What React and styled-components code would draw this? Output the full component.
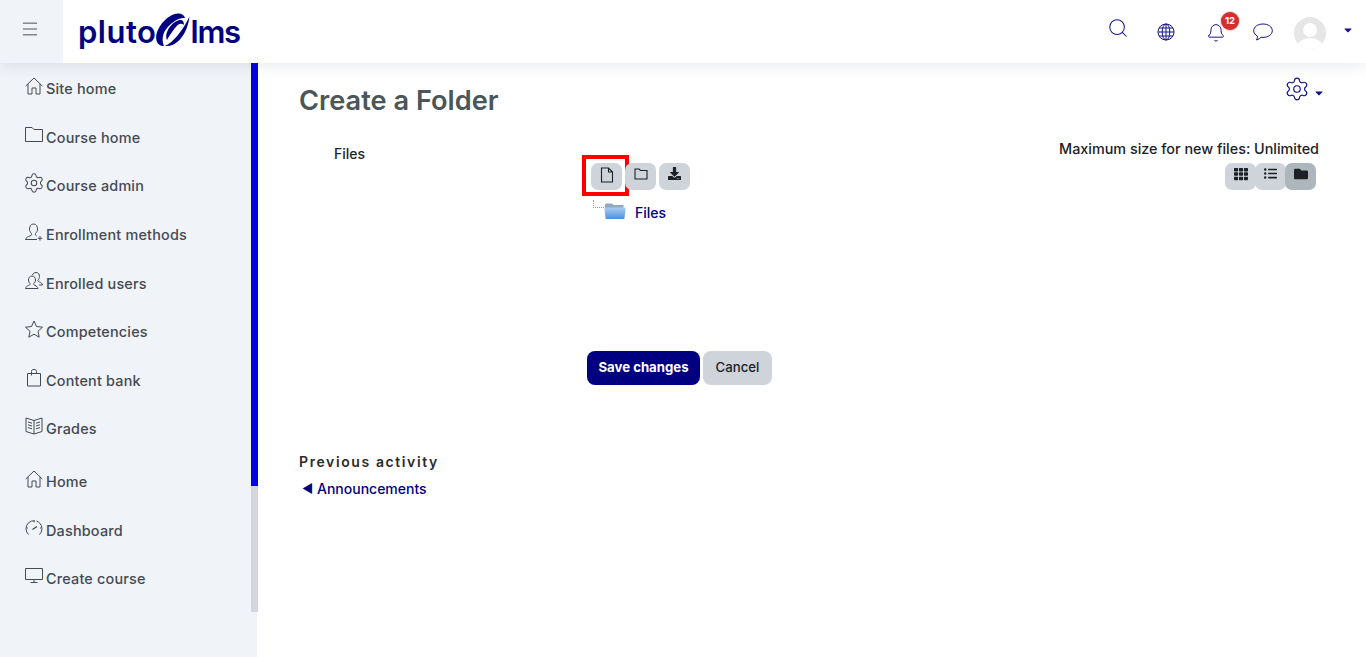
import React from "react"
import styled, { createGlobalStyle } from "styled-components"
import { Search, Bell, Settings, Menu } from "lucide-react"
import { FaFolder, FaTh, FaListUl, FaDownload, FaCaretDown } from "react-icons/fa"

const NAVY = "#000080"
const FONT = "'Inter', 'Liberation Sans', sans-serif"

const GlobalStyle = createGlobalStyle`
  html, body {
    margin: 0;
    height: 100%;
    overflow: hidden;
    background: #fff;
    font-family: ${FONT};
  }
`

const Page = styled.div`
  width: 1366px;
  height: 657px;
  display: flex;
  flex-direction: column;
  overflow: hidden;
`

const Header = styled.header`
  height: 63px;
  flex: none;
  display: flex;
  align-items: center;
  background: #fff;
  box-shadow: 0 2px 14px rgba(60, 70, 90, 0.12);
  position: relative;
  z-index: 2;
`

const MenuBox = styled.div`
  width: 63px;
  height: 63px;
  background: #f0f3f8;
  display: flex;
  align-items: center;
  justify-content: center;
  color: #444;
  padding: 0 4px 6px 0;
  box-sizing: border-box;
`

const Logo = styled.div`
  display: flex;
  align-items: center;
  margin-left: 15px;
  color: ${NAVY};
  font-size: 31px;
  font-weight: 600;
  line-height: 1;
`

const LogoWord = styled.span`
  letter-spacing: ${(p) => p.$spacing}px;
`

const HeaderIcons = styled.div`
  margin-left: auto;
  display: flex;
  align-items: center;
  color: #14148f;
  padding-right: 12px;
`

const IconSlot = styled.div`
  display: flex;
  position: relative;
  margin-left: ${(p) => p.$gap}px;
  margin-top: ${(p) => p.$top || 0}px;
`

const Badge = styled.span`
  position: absolute;
  top: -11px;
  left: 15px;
  width: 18px;
  height: 18px;
  border-radius: 50%;
  background: #d32f2f;
  box-shadow: 0 0 2px rgba(211, 47, 47, 0.7);
  color: #fff;
  font-size: 9.5px;
  font-weight: 700;
  display: flex;
  align-items: center;
  justify-content: center;
`

const Body = styled.div`
  flex: 1;
  display: flex;
  min-height: 0;
`

const Sidebar = styled.nav`
  width: 257px;
  flex: none;
  background: #f0f3f8;
  position: relative;
  padding-top: 1.5px;
  box-sizing: border-box;
`

const Track = styled.div`
  position: absolute;
  top: 0;
  left: 251px;
  width: 7px;
  height: 549px;
  background: #d3d6dc;
`

const Thumb = styled.div`
  height: 423px;
  background: #0000e6;
`

const NavGroup = styled.div`
  margin-bottom: 4px;
`

const NavItem = styled.a`
  height: 48.6px;
  display: flex;
  align-items: center;
  padding-left: 25px;
  gap: 3px;
  color: #444a52;
  font-size: 14.4px;
  font-weight: 500;
  letter-spacing: 0.2px;

  svg {
    flex: none;
    margin-bottom: 5px;
  }
`

const GearBox = styled.span`
  display: flex;
  flex: none;
  width: 18px;
  height: 18px;
  justify-content: center;
  align-items: center;
`

const Main = styled.main`
  flex: 1;
  padding: 0 47px 0 42px;
  min-width: 0;
`

const TitleRow = styled.div`
  display: flex;
  justify-content: space-between;
  padding-top: 21px;
  height: 49px;
`

const Title = styled.h1`
  margin: 0;
  font-size: 27.2px;
  line-height: 34px;
  font-weight: 600;
  color: #4a5658;
`

const GearMenu = styled.div`
  display: flex;
  align-items: center;
  height: 22px;
  margin-top: -6px;
  margin-right: -6px;
  color: #14148f;
  gap: 3px;

  svg + svg {
    margin-top: 8px;
  }
`

const FormRow = styled.div`
  display: flex;
  margin-top: 6px;
  height: 212px;
`

const FieldLabel = styled.div`
  width: 288px;
  flex: none;
  padding: 6px 0 0 35px;
  box-sizing: border-box;
  font-size: 14px;
  font-weight: 500;
  color: #23272b;
`

const Manager = styled.div`
  flex: 1;
  min-width: 0;
`

const MaxSize = styled.div`
  text-align: right;
  font-size: 14.36px;
  font-weight: 500;
  color: #1d2125;
  line-height: 15px;
  height: 16px;
  margin-top: 2px;
  margin-bottom: 6px;
`

const ToolRow = styled.div`
  display: flex;
  justify-content: space-between;
  padding: 0 3px 0 4px;
`

const ToolGroup = styled.div`
  display: flex;

  > * + * {
    margin-left: ${(p) => p.$gap}px;
  }
`

const ToolButton = styled.div`
  width: 31px;
  height: 27px;
  border-radius: 7px;
  background: ${(p) => (p.$active ? "#adb5bd" : "#ced4da")};
  display: flex;
  justify-content: center;
  padding-top: 4px;
  box-sizing: border-box;
  color: #1d2125;
  position: relative;
`

const Highlight = styled.div`
  position: absolute;
  left: -9px;
  top: -8px;
  width: 47px;
  height: 41px;
  border: 4px solid #f00;
  box-sizing: border-box;
`

const Tree = styled.div`
  display: flex;
  align-items: center;
  height: 22px;
  margin: 10px 0 0 6px;
  position: relative;
`

const Connector = styled.span`
  width: 10px;
  height: 7px;
  margin: -14px 0 0 0;
  border-left: 1px dotted #999;
  border-bottom: 1px dotted #999;
`

const TreeLabel = styled.span`
  margin-left: 9px;
  margin-top: 2px;
  color: ${NAVY};
  font-size: 14px;
  font-weight: 500;
`

const Actions = styled.div`
  display: flex;
  gap: 3px;
  margin-left: 288px;
`

const Button = styled.button`
  height: 34px;
  width: ${(p) => p.$w}px;
  padding: 0 0 2px;
  border: 0;
  border-radius: 8px;
  background: ${(p) => (p.$primary ? NAVY : "#ced4da")};
  color: ${(p) => (p.$primary ? "#fff" : "#1d2125")};
  font-family: ${FONT};
  font-size: 13.2px;
  font-weight: ${(p) => (p.$primary ? 700 : 500)};
`

const Previous = styled.div`
  margin-top: 66px;
  font-size: 14px;
  line-height: 21px;
  font-weight: 600;
  letter-spacing: 1.6px;
  color: #2b2b2b;
`

const PrevLink = styled.a`
  display: flex;
  align-items: center;
  margin-top: 7px;
  margin-left: 3px;
  font-size: 14px;
  line-height: 20px;
  font-weight: 500;
  color: ${NAVY};
`

const PrevArrow = styled.span`
  font-size: 12px;
  width: 15px;
`

const Swirl = () => (
  <svg width="34" height="34" viewBox="0 0 34 34" fill={NAVY} style={{ margin: "-3px 0 0 0" }}>
    <path d="M8 33C2 33 -1 28 .5 21C3 11 13 1 22 .5C26 .5 28 2 29 5C23 4 14 10 9.500 17C6 22 6 29 8 33Z" />
    <path d="M9 33C18 34 25 27 29 19C31 15 33 9 33.500 3.500C31 9 27 16 22 22C18 27 13 31 9 33Z" />
    <path d="M11 27C8 20 15 10 22 7.500C26 6 28 8 28 12C25 9.500 22 11 19 15C16 19 13 23 11 27Z" />
  </svg>
)

const NavSvg = ({ children }) => (
  <svg width="18" height="18" viewBox="0 0 18 18" fill="none" stroke="currentColor" strokeWidth="1">
    {children}
  </svg>
)

const HouseIcon = () => (
  <NavSvg>
    <path d="M.7 9L9 1L17.300 9M3 7V17H7V11H11V17H15V7" />
  </NavSvg>
)

const FolderIcon = () => (
  <NavSvg>
    <path d="M.5 1.500H7L9 3.500H17.500V15.500H.500Z" />
  </NavSvg>
)

const GearIcon = () => (
  <GearBox>
    <Settings size={22} strokeWidth={1.1} />
  </GearBox>
)

const StarIcon = () => (
  <NavSvg>
    <path d="M9 1L11.500 6.500L17.500 7.200L13 11.300L14.200 17.200L9 14.200L3.800 17.200L5 11.300L.500 7.200L6.500 6.500Z" />
  </NavSvg>
)

const MonitorIcon = () => (
  <NavSvg>
    <path d="M.5 1.500H17.500V12.500H.500ZM9 12.500V15.500M5.500 15.500H12.500" />
  </NavSvg>
)

const UserPlusIcon = () => (
  <NavSvg>
    <path d="M8.500 1C5.500 1 4.500 3.500 4.500 6C4.500 8 5.500 9.500 6.500 10.500C6.800 11.500 6.500 12.500 5 13C3 13.600 1 14.500.500 16.500H12" />
    <path d="M8.500 1C11.500 1 12.500 3.500 12.500 6C12.500 8 11.500 9.500 10.500 10.500C10.200 11.500 10.500 12.500 11.500 13" />
    <path d="M15 13V17.500M12.800 15.300H17.300" />
  </NavSvg>
)

const UsersIcon = () => (
  <NavSvg>
    <path d="M7 4C4.500 4 3.500 6 3.500 8C3.500 9.500 4.300 10.800 5 11.500C5.200 12.500 4.800 13 3.500 13.500C2 14 .800 14.800.500 16.500H13C12.800 14.800 11.500 14 10 13.500C8.800 13 8.500 12.500 8.800 11.500C9.700 10.800 10.500 9.500 10.500 8C10.500 6 9.500 4 7 4Z" />
    <path d="M7.500 3C8 1.500 9.500.500 11 .500C13.500.500 14.500 2.500 14.500 4.500C14.500 6 13.700 7.300 13 8C12.800 9 13.200 9.500 14.500 10C16 10.500 17.200 11.300 17.500 13H14" />
  </NavSvg>
)

const BagIcon = () => (
  <NavSvg>
    <path d="M2.500 4.500H15.500V17H2.500Z" />
    <path d="M6.500 6.500V2.500C6.500 1 7.500.500 9 .500C10.500.500 11.500 1 11.500 2.500V4.500" />
  </NavSvg>
)

const BookIcon = () => (
  <NavSvg>
    <path d="M9 3.500L1 1V14.500L9 17L17 14.500V1L9 3.500V17" />
    <path d="M3 5L7 6.200M3 7.800L7 9M3 10.600L7 11.800M15 5L11 6.200M15 7.800L11 9M15 10.600L11 11.800" />
  </NavSvg>
)

const GaugeIcon = () => (
  <NavSvg>
    <path d="M3.500 15.500A8 8 0 1 1 14.500 15.500" strokeDasharray="20 1.500" />
    <path d="M7.500 10.500L12 7.500" strokeWidth="1.300" />
    <path d="M1.800 9H3M15 9H16.200M9 2V3.200" />
  </NavSvg>
)

const GlobeIcon = () => (
  <svg width="18" height="18" viewBox="0 0 18 18" fill="none" stroke="currentColor" strokeWidth="1">
    <circle cx="9" cy="9" r="8" />
    <ellipse cx="9" cy="9" rx="3.800" ry="8" />
    <path d="M9 1V17M1 9H17M2 5H16M2 13H16" />
  </svg>
)

const ChatIcon = () => (
  <svg width="20" height="18" viewBox="0 0 20 18" fill="none" stroke="currentColor" strokeWidth="1">
    <path d="M10 1C4.800 1 .7 3.800.7 7.700C.7 10 2.200 12 4.500 13.200C4.500 14.700 4 16 3.500 17C5.500 16.500 7 15.500 8 14.300C8.600 14.400 9.300 14.400 10 14.400C15.200 14.400 19.300 11.500 19.300 7.700C19.300 3.800 15.200 1 10 1Z" />
  </svg>
)

const FileOutline = () => (
  <svg width="14" height="16" viewBox="0 0 14 16" fill="none" stroke="currentColor" strokeWidth="1.100">
    <path d="M1.500 1H8.500L12.500 5V15H1.500ZM8.500 1V5H12.500" />
  </svg>
)

const FolderOutline = () => (
  <svg width="14" height="14" viewBox="0 0 14 14" fill="none" stroke="currentColor" strokeWidth="1.100">
    <path d="M1 2H5L6.500 3.500H13V12H1Z" />
  </svg>
)

const Avatar = () => (
  <svg width="32" height="32" viewBox="0 0 32 32">
    <defs>
      <clipPath id="avatarClip">
        <circle cx="16" cy="16" r="16" />
      </clipPath>
    </defs>
    <circle cx="16" cy="16" r="16" fill="#e6e6e6" />
    <g clipPath="url(#avatarClip)" fill="#fff">
      <circle cx="16" cy="13" r="7" />
      <ellipse cx="16" cy="30" rx="13" ry="9" />
    </g>
  </svg>
)

const FolderColor = () => (
  <svg width="22" height="18" viewBox="0 0 22 18">
    <defs>
      <linearGradient id="folderFill" x1="0" y1="0" x2="0" y2="1">
        <stop offset="0" stopColor="#a9cdf2" />
        <stop offset="1" stopColor="#4f8fdc" />
      </linearGradient>
    </defs>
    <path d="M2 1.500H8L9.500 3H19.500V7H1V2.500Z" fill="#8fa9c4" />
    <path d="M1.500 5.500H20.500C21.300 5.500 21.600 6 21.500 6.800L20.500 16C20.400 16.800 20 17 19.300 17H2.700C2 17 1.600 16.800 1.500 16L.500 6.800C.400 6 .700 5.500 1.500 5.500Z" fill="url(#folderFill)" />
  </svg>
)

const primaryNav = [
  { label: "Site home", icon: <HouseIcon /> },
  { label: "Course home", icon: <FolderIcon /> },
  { label: "Course admin", icon: <GearIcon /> },
  { label: "Enrollment methods", icon: <UserPlusIcon /> },
  { label: "Enrolled users", icon: <UsersIcon /> },
  { label: "Competencies", icon: <StarIcon /> },
  { label: "Content bank", icon: <BagIcon /> },
  { label: "Grades", icon: <BookIcon /> },
]

const secondaryNav = [
  { label: "Home", icon: <HouseIcon /> },
  { label: "Dashboard", icon: <GaugeIcon /> },
  { label: "Create course", icon: <MonitorIcon /> },
]

const App = () => {
  return (
    <Page>
      <GlobalStyle />
      <Header>
        <MenuBox>
          <Menu size={20} strokeWidth={1.1} />
        </MenuBox>
        <Logo>
          <LogoWord $spacing={0.5}>pluto</LogoWord>
          <Swirl />
          <LogoWord $spacing={-1.2}>lms</LogoWord>
        </Logo>
        <HeaderIcons>
          <IconSlot $gap={0} $top={-7}>
            <Search size={22} strokeWidth={1.1} />
          </IconSlot>
          <IconSlot $gap={28}>
            <GlobeIcon />
          </IconSlot>
          <IconSlot $gap={31} $top={2}>
            <Bell size={20} strokeWidth={1.2} />
            <Badge>12</Badge>
          </IconSlot>
          <IconSlot $gap={27}>
            <ChatIcon />
          </IconSlot>
          <IconSlot $gap={21} $top={3}>
            <Avatar />
          </IconSlot>
          <IconSlot $gap={16} $top={-3}>
            <FaCaretDown size={12} />
          </IconSlot>
        </HeaderIcons>
      </Header>
      <Body>
        <Sidebar>
          <NavGroup>
            {primaryNav.map((item) => (
              <NavItem key={item.label}>
                {item.icon}
                {item.label}
              </NavItem>
            ))}
          </NavGroup>
          {secondaryNav.map((item) => (
            <NavItem key={item.label}>
              {item.icon}
              {item.label}
            </NavItem>
          ))}
          <Track>
            <Thumb />
          </Track>
        </Sidebar>
        <Main>
          <TitleRow>
            <Title>Create a Folder</Title>
            <GearMenu>
              <Settings size={26} strokeWidth={1.1} />
              <FaCaretDown size={12} />
            </GearMenu>
          </TitleRow>
          <FormRow>
            <FieldLabel>Files</FieldLabel>
            <Manager>
              <MaxSize>Maximum size for new files: Unlimited</MaxSize>
              <ToolRow>
                <ToolGroup $gap={3}>
                  <ToolButton>
                    <FileOutline />
                    <Highlight />
                  </ToolButton>
                  <ToolButton>
                    <FolderOutline />
                  </ToolButton>
                  <ToolButton>
                    <FaDownload size={13} />
                  </ToolButton>
                </ToolGroup>
                <ToolGroup $gap={-1}>
                  <ToolButton>
                    <FaTh size={14} />
                  </ToolButton>
                  <ToolButton>
                    <FaListUl size={13} />
                  </ToolButton>
                  <ToolButton $active>
                    <FaFolder size={14} />
                  </ToolButton>
                </ToolGroup>
              </ToolRow>
              <Tree>
                <Connector />
                <FolderColor />
                <TreeLabel>Files</TreeLabel>
              </Tree>
            </Manager>
          </FormRow>
          <Actions>
            <Button $primary $w={113}>
              Save changes
            </Button>
            <Button $w={69}>Cancel</Button>
          </Actions>
          <Previous>Previous activity</Previous>
          <PrevLink>
            <PrevArrow>◄</PrevArrow>
            Announcements
          </PrevLink>
        </Main>
      </Body>
    </Page>
  )
}

export default App
